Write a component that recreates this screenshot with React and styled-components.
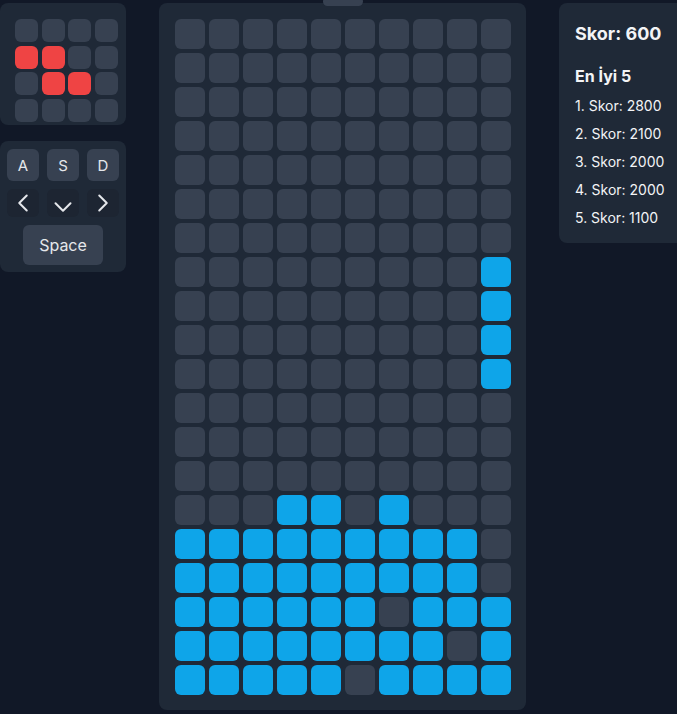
import React from "react";
import styled, { createGlobalStyle } from "styled-components";
import { ChevronLeft, ChevronRight, ChevronDown } from "lucide-react";

const Global = createGlobalStyle`
  html, body { margin: 0; background: #111827; font-family: Inter, "Noto Sans", sans-serif; color: #f3f4f6; overflow: hidden; }
`;

const Page = styled.div`
  display: flex; align-items: flex-start; gap: 33px; padding-top: 3px; width: 800px;
`;
const Column = styled.div` display: flex; flex-direction: column; gap: 16px; width: 126px; `;
const Panel = styled.div` background: #1f2937; border-radius: 8px; `;
const PreviewPanel = styled(Panel)` padding: 16px 10px 16px 15px; height: 90px; `;
const Preview = styled.div` display: grid; grid-template-columns: repeat(4, 23px); grid-auto-rows: 23px; gap: 3.5px; `;
const Cell = styled.div` border-radius: 6px; background: ${p => (p.$c === "r" ? "#ef4444" : p.$c === "b" ? "#0ea5e9" : "#374151")}; `;
const ControlPanel = styled(Panel)` padding: 8px 7px 7px; display: flex; flex-direction: column; align-items: center; gap: 8px; `;
const KeyRow = styled.div` display: flex; gap: 8px; `;
const Key = styled.div`
  width: 32px; height: ${p => (p.$ghost ? "28px" : "32px")}; border-radius: 6px; background: ${p => (p.$ghost ? "#1d2532" : "#374151")};
  display: flex; align-items: center; justify-content: center; font-size: 15px; color: #e5e7eb;
`;
const SpaceKey = styled.div`
  width: 80px; height: 40px; border-radius: 6px; background: #374151; display: flex; align-items: center; justify-content: center; font-size: 16px; color: #e5e7eb;
`;
const Board = styled(Panel)` position: relative; padding: 16px 15px 15px 16px; `;
const Tab = styled.div` position: absolute; top: -6px; left: 164px; width: 40px; height: 9px; border-radius: 5px; background: #374151; `;
const Grid = styled.div` display: grid; grid-template-columns: repeat(10, 30px); grid-auto-rows: 30px; gap: 4px; `;
const ScorePanel = styled(Panel)` width: 140px; padding: 19px 16px 15px; box-sizing: border-box; `;
const Score = styled.div` font-size: 18px; font-weight: 700; line-height: 24px; `;
const Title = styled.div` font-size: 16px; font-weight: 700; margin-top: 18px; line-height: 24px; `;
const Item = styled.div` font-size: 14px; line-height: 20px; margin-top: 8px; `;

const preview = ["....", "rr..", ".rr.", "...."];
const rows = [
  "..........", "..........", "..........", "..........", "..........", "..........", "..........",
  ".........b", ".........b", ".........b", ".........b",
  "..........", "..........", "..........",
  "...bb.b...", "bbbbbbbbb.", "bbbbbbbbb.", "bbbbbb.bbb", "bbbbbbbb.b", "bbbbb.bbbb",
];

export default function App() {
  return (
    <>
      <Global />
      <Page>
        <Column>
          <PreviewPanel>
            <Preview>{preview.join("").split("").map((c, i) => <Cell key={i} $c={c} />)}</Preview>
          </PreviewPanel>
          <ControlPanel>
            <KeyRow><Key>A</Key><Key>S</Key><Key>D</Key></KeyRow>
            <KeyRow>
              <Key $ghost><ChevronLeft size={30} strokeWidth={1.6} /></Key>
              <Key $ghost><ChevronDown size={30} strokeWidth={1.6} style={{ marginTop: 8 }} /></Key>
              <Key $ghost><ChevronRight size={30} strokeWidth={1.6} /></Key>
            </KeyRow>
            <SpaceKey>Space</SpaceKey>
          </ControlPanel>
        </Column>
        <Board>
          <Tab />
          <Grid>{rows.join("").split("").map((c, i) => <Cell key={i} $c={c} />)}</Grid>
        </Board>
        <ScorePanel>
          <Score>Skor: 600</Score>
          <Title>En İyi 5</Title>
          {[2800, 2100, 2000, 2000, 1100].map((s, i) => <Item key={i}>{i + 1}. Skor: {s}</Item>)}
        </ScorePanel>
      </Page>
    </>
  );
}
